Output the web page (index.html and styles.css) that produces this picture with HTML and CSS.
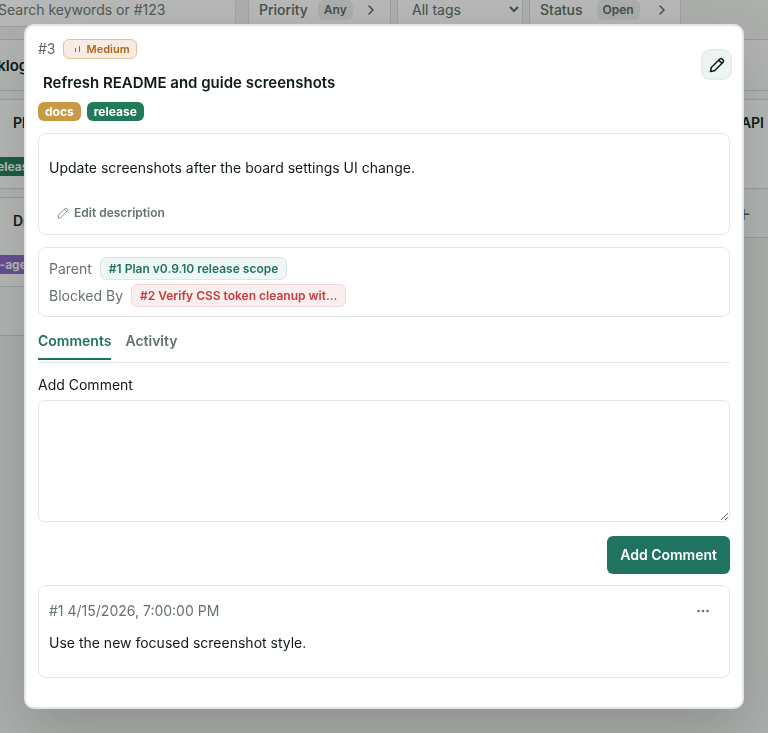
FILE: index.html
```html
<!DOCTYPE html>
<html lang="en">
<head>
<meta charset="utf-8">
<meta name="viewport" content="width=device-width, initial-scale=1">
<title>Board</title>
<link rel="stylesheet" href="styles.css">
</head>
<body>
<div class="page">
  <div class="filters">
    <input class="search" type="search" aria-label="Search" placeholder="Search keywords or #123">
    <button class="filter priority" type="button">Priority <span class="value">Any</span>
      <svg width="12" height="12" viewBox="0 0 12 12"><path d="M4 2l4 4-4 4"/></svg></button>
    <select class="filter tags-select" aria-label="Tags"><option>All tags</option></select>
    <button class="filter status" type="button">Status <span class="value">Open</span>
      <svg width="12" height="12" viewBox="0 0 12 12"><path d="M4 2l4 4-4 4"/></svg></button>
  </div>
  <div class="board">
    <section class="column">
      <h2>Backlog</h2>
      <article class="card"><h3>Plan</h3><div class="card-tags"><span class="tag release">release</span></div></article>
      <article class="card"><h3>Draft</h3><div class="card-tags"><span class="tag agent">ai-agent</span></div></article>
      <button class="add" type="button" aria-label="Add card">+</button>
    </section>
    <section class="column last">
      <h2></h2>
      <article class="card"><h3>API</h3></article>
      <button class="add" type="button" aria-label="Add card">+</button>
    </section>
  </div>
</div>
<div class="scrim">
  <div class="modal" role="dialog" aria-modal="true" aria-labelledby="issue-title">
    <header class="head">
      <div class="head-main">
        <div class="meta"><span class="number">#3</span>
          <span class="level"><svg width="12" height="12" viewBox="0 0 12 12"><path d="M5.5 5v4M9.5 3v6"/></svg>Medium</span></div>
        <h1 id="issue-title">Refresh README and guide screenshots</h1>
        <div class="tags"><span class="tag docs">docs</span><span class="tag release">release</span></div>
      </div>
      <button class="edit" type="button" aria-label="Edit issue">
        <svg width="16" height="16" viewBox="0 0 16 16"><path d="M1.500 14.500l.8-4L10.600 2.200a2 2 0 0 1 2.800 0l.4.4a2 2 0 0 1 0 2.800L5.500 13.700zM9.700 3.100l3.200 3.200"/></svg>
      </button>
    </header>
    <section class="panel description">
      <p>Update screenshots after the board settings UI change.</p>
      <button class="edit-text" type="button"><svg width="12" height="12" viewBox="0 0 16 16"><path d="M1.500 14.500l.8-4L10.600 2.200a2 2 0 0 1 2.800 0l.4.4a2 2 0 0 1 0 2.800L5.500 13.700zM9.700 3.100l3.200 3.200"/></svg>Edit description</button>
    </section>
    <section class="panel relations">
      <div class="relation"><span>Parent</span><a class="chip" href="#1">#1 Plan v0.9.10 release scope</a></div>
      <div class="relation"><span>Blocked By</span><a class="chip blocked" href="#2">#2 Verify CSS token cleanup wit...</a></div>
    </section>
    <div class="tabs" role="tablist">
      <button class="tab active" type="button" role="tab" aria-selected="true">Comments</button>
      <button class="tab" type="button" role="tab" aria-selected="false">Activity</button>
    </div>
    <form class="comment-form">
      <label for="comment">Add Comment</label>
      <textarea id="comment"></textarea>
      <button class="submit" type="button">Add Comment</button>
    </form>
    <article class="panel comment">
      <div class="comment-head"><span>#1 4/15/2026, 7:00:00 PM</span>
        <button class="more" type="button" aria-label="Comment actions"><svg width="14" height="4" viewBox="0 0 14 4"><circle cx="2.500" cy="2" r="1.300"/><circle cx="7" cy="2" r="1.300"/><circle cx="11.500" cy="2" r="1.300"/></svg></button></div>
      <p>Use the new focused screenshot style.</p>
    </article>
  </div>
</div>
</body>
</html>
```
FILE: styles.css
```css
* { box-sizing: border-box; }
body { margin: 0; font: 14px/20px Inter, "Liberation Sans", sans-serif; color: #101a17; background: #f1f2f0; }
h1, h2, h3, p { margin: 0; }
button, input, select, textarea { font: inherit; color: inherit; }
button { border: 0; background: none; padding: 0; }
svg { fill: none; stroke: currentColor; stroke-linecap: round; stroke-linejoin: round; flex: none; }

.page { height: 100vh; overflow: hidden; }
.filters { display: flex; gap: 6px; height: 39px; margin: -8px 0 0 -13px; }
.search, .filter { height: 35px; border: 1px solid #dcdfdd; border-radius: 6px; background: #fff; color: #586a64; }
.search { width: 249px; margin-right: 6px; padding: 0 10px; }
.search::placeholder { color: #6d7975; opacity: 1; }
.filter { display: flex; align-items: center; gap: 10px; padding: 0 10px; font-weight: 500; }
.filter svg { margin-left: 2px; stroke-width: 1.5; }
.value { padding: 0 6px; border-radius: 6px; background: #eef1ef; font-size: 12px; font-weight: 600; }
.priority { width: 143px; }
.tags-select { width: 126px; font-weight: 400; }
.status { width: 152px; gap: 14px; }
.board { display: grid; grid-template-columns: 280px 280px; justify-content: space-between; align-items: start; margin: 8px -20px 0 -120px; }
.column { border: 1px solid #d6d9d7; background: #f9faf9; }
.column h2 { height: 51px; padding: 16px 0 0 89px; font-size: 15px; font-weight: 600; border-bottom: 1px solid #d6d9d7; }
.card { height: 90px; margin-top: 8px; padding: 13px 8px; border: 1px solid #d6d9d7; background: #fff; }
.card h3 { padding-left: 123px; font-size: 14px; font-weight: 600; }
.card-tags { display: flex; justify-content: center; margin-top: 24px; padding-right: 12px; }
.add { display: block; height: 48px; padding-left: 227px; font-size: 24px; font-weight: 300; color: #52645e; }
.last .card h3 { padding: 0 14px; text-align: right; }

.scrim { position: fixed; inset: 0; padding: 24px; background: rgba(20, 22, 20, 0.3); }
.modal { padding: 12px 12px 29px; border: 2px solid #e4e6e5; border-radius: 10px; background: #fff; box-shadow: 0 24px 64px rgba(16, 36, 26, 0.22); }
.head { display: flex; justify-content: space-between; align-items: flex-start; }
.meta { display: flex; align-items: center; gap: 7px; height: 22px; }
.number { color: #586a64; }
.level { display: flex; align-items: center; gap: 5px; height: 20px; padding: 0 6px; border: 1px solid #e2c3a0; border-radius: 6px; background: #f6ece3; color: #ad6618; font-size: 11px; font-weight: 600; }
.level svg { stroke-linecap: butt; }
h1 { margin: 12px 0 8px; padding-left: 5px; font-size: 15px; line-height: 22px; font-weight: 600; }
.tags { display: flex; gap: 6px; }
.tag { padding: 0 7px; border-radius: 6px; color: #fff; font-size: 12px; line-height: 19px; font-weight: 700; }
.docs { background: #c79a45; }
.release { background: #217a58; }
.agent { background: #8f68c8; }
.edit { display: grid; place-items: center; width: 27px; height: 27px; margin-top: 13px; border-radius: 7px; background: #edf4f2; box-shadow: 0 0 0 2px #e5eeec; }
.edit svg { stroke-width: 1.5; }
.panel { margin-top: 12px; padding: 8px 10px; border: 1px solid #e4e6e5; border-radius: 8px; }
.description { padding: 24px 10px 11px; }
.edit-text { display: flex; align-items: center; gap: 5px; height: 20px; margin-top: 25px; padding: 0 8px; color: #65736e; font-size: 12px; font-weight: 600; }
.relations { display: grid; gap: 4px; padding: 9px 10px; }
.relation { display: flex; align-items: center; gap: 8px; color: #65736e; }
.chip { padding: 0 8px; border: 1px solid #d8e7e1; border-radius: 6px; background: #eff7f4; color: #207360; font-size: 12px; line-height: 21px; font-weight: 600; text-decoration: none; }
.blocked { border-color: #eed7d7; background: #fbeeee; color: #c63b3b; }
.tabs { display: flex; gap: 14px; height: 46px; border-bottom: 1px solid #e4e6e5; }
.tab { height: 43px; padding-top: 6px; border-bottom: 2px solid transparent; color: #65736e; font-weight: 600; }
.active { border-color: #207360; color: #207360; }
.comment-form { display: flex; flex-direction: column; margin-top: 12px; }
textarea { height: 122px; margin: 5px 0 14px; padding: 8px; border: 1px solid #e4e6e5; border-radius: 6px; background: #fff; resize: vertical; }
.submit { align-self: flex-end; height: 38px; padding: 0 13px; border-radius: 6px; background: #207360; color: #fff; font-weight: 600; }
.comment { margin-top: 11px; padding: 15px 10px 24px; }
.comment-head { display: flex; justify-content: space-between; align-items: center; margin-bottom: 12px; padding-right: 9px; color: #65736e; }
.more { display: flex; }
.more svg { fill: currentColor; stroke: none; }
```
